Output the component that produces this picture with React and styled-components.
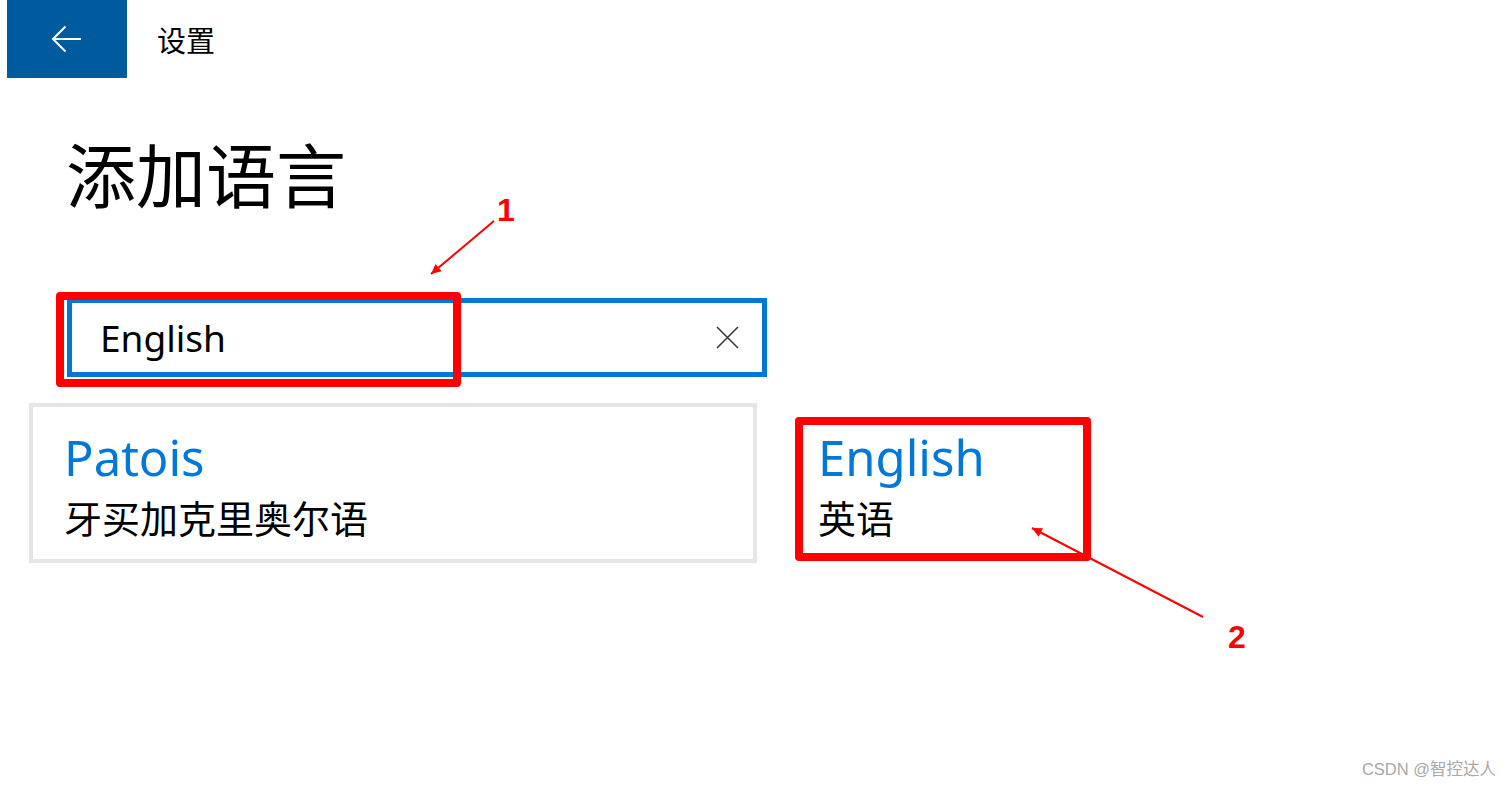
import React from "react";
import styled, { createGlobalStyle } from "styled-components";

const GlobalStyle = createGlobalStyle`
  html, body {
    margin: 0;
    padding: 0;
    background: #ffffff;
  }
  body {
    font-family: "Noto Sans", "Noto Sans CJK SC", sans-serif;
    color: #000;
  }
`;

const Page = styled.div`
  position: relative;
  width: 1512px;
  height: 789px;
  overflow: hidden;
  background: #fff;
`;

// HEADER
const Header = styled.header`
  display: flex;
  align-items: center;
  height: 78px;
`;

const BackButton = styled.button`
  display: flex;
  align-items: center;
  justify-content: center;
  margin-left: 7px;
  width: 120px;
  height: 78px;
  padding: 0;
  border: none;
  background-color: #005a9e;
  cursor: pointer;
`;

const HeaderTitle = styled.span`
  margin-left: 30px;
  font-family: "Noto Sans CJK SC", sans-serif;
  font-size: 29px;
  line-height: 1;
`;

// CONTENT
const Content = styled.main`
  display: flex;
  flex-direction: column;
  padding-left: 29px;
`;

const Heading = styled.h1`
  margin: 59px 0 0 37px;
  font-family: "Noto Sans CJK SC", sans-serif;
  font-size: 70px;
  font-weight: 400;
  line-height: 72px;
`;

const SearchBox = styled.div`
  display: flex;
  align-items: center;
  box-sizing: border-box;
  margin: 89px 0 0 38px;
  width: 700px;
  height: 79px;
  padding: 0 23px 0 28px;
  border: 5px solid #0078d7;
`;

const SearchText = styled.span`
  flex: 1;
  font-size: 37px;
`;

const ResultGrid = styled.div`
  display: grid;
  grid-template-columns: 728px 728px;
  column-gap: 26px;
  margin-top: 26px;
`;

const Card = styled.div`
  box-sizing: border-box;
  height: 160px;
  padding: 22px 0 0 31px;
  border: 4px solid ${(p) => (p.$hover ? "#e6e6e6" : "transparent")};
`;

const LangName = styled.div`
  color: #0078d7;
  font-size: 49px;
  line-height: 56px;
`;

const LangLocal = styled.div`
  margin-top: 10px;
  font-family: "Noto Sans CJK SC", sans-serif;
  font-size: 38px;
  line-height: 44px;
`;

// ANNOTATIONS (overlay)
const RedFrame = styled.div`
  position: absolute;
  box-sizing: border-box;
  left: ${(p) => p.$x}px;
  top: ${(p) => p.$y}px;
  width: ${(p) => p.$w}px;
  height: ${(p) => p.$h}px;
  border: 8px solid #ff0000;
  border-radius: 4px;
`;

const Marker = styled.span`
  position: absolute;
  left: ${(p) => p.$x}px;
  top: ${(p) => p.$y}px;
  color: #ff0000;
  font-family: "Liberation Sans", Arial, sans-serif;
  font-weight: 700;
  font-size: 32px;
  line-height: 1;
`;

const ArrowLayer = styled.svg`
  position: absolute;
  left: 0;
  top: 0;
  pointer-events: none;
`;

const Watermark = styled.span`
  position: absolute;
  right: 16px;
  top: 761px;
  color: #a8a8a8;
  font-family: "Liberation Sans", "Noto Sans CJK SC", sans-serif;
  font-size: 16.5px;
  line-height: 1;
`;

const BackArrow = () => (
  <svg width="32" height="28" viewBox="0 0 32 28">
    <path
      d="M30 14H2M14.5 1.5L2 14l12.5 12.5"
      fill="none"
      stroke="#fff"
      strokeWidth="2"
    />
  </svg>
);

const ClearIcon = () => (
  <svg width="23" height="23" viewBox="0 0 23 23">
    <path d="M1 1l21 21M22 1L1 22" fill="none" stroke="#3a3a3a" strokeWidth="1.6" />
  </svg>
);

function Arrow({ x1, y1, x2, y2 }) {
  const a = Math.atan2(y2 - y1, x2 - x1);
  const len = 11;
  const spread = 0.45;
  const p1 = [x2 - len * Math.cos(a - spread), y2 - len * Math.sin(a - spread)];
  const p2 = [x2 - len * Math.cos(a + spread), y2 - len * Math.sin(a + spread)];
  return (
    <g>
      <line x1={x1} y1={y1} x2={x2} y2={y2} stroke="#ff0000" strokeWidth="2" />
      <polygon points={`${x2},${y2} ${p1[0]},${p1[1]} ${p2[0]},${p2[1]}`} fill="#ff0000" />
    </g>
  );
}

export default function App() {
  return (
    <Page>
      <GlobalStyle />
      <Header>
        <BackButton aria-label="back">
          <BackArrow />
        </BackButton>
        <HeaderTitle>设置</HeaderTitle>
      </Header>

      <Content>
        <Heading>添加语言</Heading>
        <SearchBox>
          <SearchText>English</SearchText>
          <ClearIcon />
        </SearchBox>
        <ResultGrid>
          <Card $hover>
            <LangName>Patois</LangName>
            <LangLocal>牙买加克里奥尔语</LangLocal>
          </Card>
          <Card>
            <LangName>English</LangName>
            <LangLocal>英语</LangLocal>
          </Card>
        </ResultGrid>
      </Content>

      <RedFrame $x={56} $y={292} $w={405} $h={95} />
      <RedFrame $x={795} $y={417} $w={296} $h={144} />
      <ArrowLayer width="1512" height="789">
        <Arrow x1={494} y1={221} x2={431} y2={274} />
        <Arrow x1={1203} y1={617} x2={1032} y2={528} />
      </ArrowLayer>
      <Marker $x={497} $y={194}>1</Marker>
      <Marker $x={1228} $y={621}>2</Marker>
      <Watermark>CSDN @智控达人</Watermark>
    </Page>
  );
}
